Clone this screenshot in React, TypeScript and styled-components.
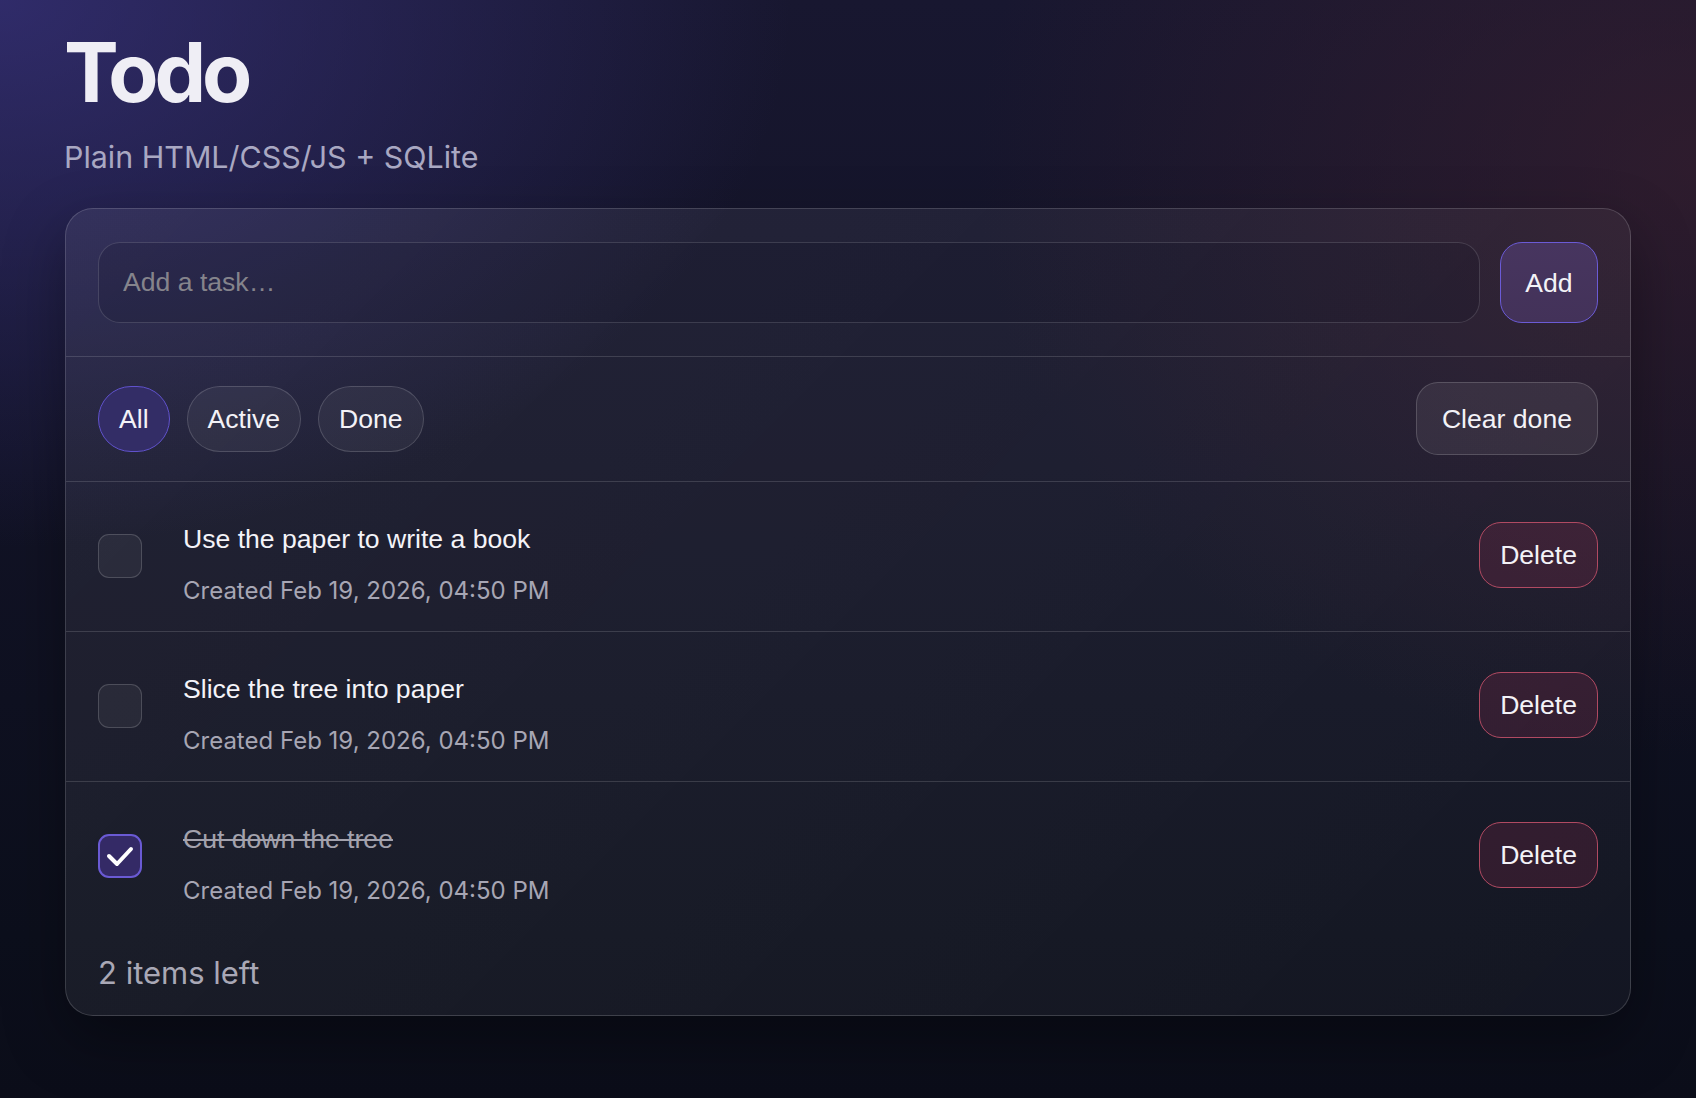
import React from "react";
import styled, { createGlobalStyle } from "styled-components";

const tasks = [
  { id: 3, title: "Use the paper to write a book", created: "Feb 19, 2026, 04:50 PM", done: false },
  { id: 2, title: "Slice the tree into paper", created: "Feb 19, 2026, 04:50 PM", done: false },
  { id: 1, title: "Cut down the tree", created: "Feb 19, 2026, 04:50 PM", done: true },
];

const filters = ["All", "Active", "Done"];

const App = () => {
  const left = tasks.filter((t) => !t.done).length;

  return (
    <>
      <GlobalStyle />
      <Page>
        <Title>Todo</Title>
        <Subtitle>Plain HTML/CSS/JS + SQLite</Subtitle>

        <Card>
          <AddRow>
            <TaskInput placeholder="Add a task…" />
            <AddButton>Add</AddButton>
          </AddRow>

          <FilterRow>
            <Pills>
              {filters.map((f) => (
                <Pill key={f} active={f === "All"}>
                  {f}
                </Pill>
              ))}
            </Pills>
            <ClearButton>Clear done</ClearButton>
          </FilterRow>

          <List>
            {tasks.map((t) => (
              <Item key={t.id}>
                <Check checked={t.done}>
                  {t.done && (
                    <svg width="32" height="32" viewBox="0 0 32 32">
                      <polyline
                        points="5,16 13,24 27,9"
                        fill="none"
                        stroke="#fff"
                        strokeWidth="4"
                        strokeLinecap="round"
                        strokeLinejoin="round"
                      />
                    </svg>
                  )}
                </Check>
                <TextBlock>
                  <TaskTitle done={t.done}>{t.title}</TaskTitle>
                  <Meta>Created {t.created}</Meta>
                </TextBlock>
                <DeleteButton>Delete</DeleteButton>
              </Item>
            ))}
          </List>

          <Footer>{left} items left</Footer>
        </Card>
      </Page>
    </>
  );
};

export default App;

const GlobalStyle = createGlobalStyle`
  html, body {
    margin: 0;
    padding: 0;
  }
  body {
    min-height: 100vh;
    font-family: Inter, "Noto Sans", sans-serif;
    color: #f1f0f6;
    background:
      radial-gradient(1100px 760px at 0% 0%, rgba(58, 52, 130, 0.7), transparent 72%),
      radial-gradient(1000px 820px at 100% 15%, rgba(62, 32, 46, 0.6), transparent 72%),
      linear-gradient(180deg, #181730 0%, #0c0f1c 85%, #0b0d19 100%);
  }
`;

const Page = styled.div`
  padding: 32px 65px 60px 64px;
  min-height: 100vh;
  box-sizing: border-box;
`;

const Title = styled.h1`
  margin: 0;
  font-family: Inter, sans-serif;
  font-size: 82px;
  font-weight: 700;
  line-height: 82px;
  letter-spacing: -0.05em;
  color: #efeef5;
`;

const Subtitle = styled.div`
  margin-top: 24px;
  font-size: 30.4px;
  line-height: 39px;
  color: #a9a8c2;
`;

const Card = styled.div`
  margin-top: 31px;
  margin-left: 1px;
  border: 1px solid rgba(255, 255, 255, 0.16);
  border-radius: 28px;
  background: linear-gradient(135deg, rgba(255, 255, 255, 0.07), rgba(255, 255, 255, 0.035));
  box-shadow: 0 24px 60px rgba(0, 0, 0, 0.35);
  overflow: hidden;
`;

const AddRow = styled.div`
  display: flex;
  gap: 20px;
  padding: 33px 32px;
  border-bottom: 1px solid rgba(255, 255, 255, 0.14);
`;

const TaskInput = styled.input`
  flex: 1;
  height: 81px;
  box-sizing: border-box;
  padding: 0 24px;
  border: 1.5px solid rgba(255, 255, 255, 0.14);
  border-radius: 22px;
  background: rgba(10, 10, 30, 0.16);
  color: #f1f0f6;
  font-family: "Liberation Sans", Arial, sans-serif;
  font-size: 26.6px;
  outline: none;

  &::placeholder {
    color: #85848c;
  }
`;

const BaseButton = styled.button`
  box-sizing: border-box;
  font-family: "Liberation Sans", Arial, sans-serif;
  font-size: 26.6px;
  line-height: 30px;
  color: #f3f2f7;
  border-width: 1.5px;
  border-style: solid;
  cursor: pointer;
`;

const AddButton = styled(BaseButton)`
  width: 98px;
  height: 81px;
  border-radius: 22px;
  border-color: #6b5bd6;
  background: linear-gradient(180deg, #47355f, #433259);
`;

const FilterRow = styled.div`
  display: flex;
  align-items: center;
  justify-content: space-between;
  padding: 25px 32px 26px;
  border-bottom: 1px solid rgba(255, 255, 255, 0.14);
`;

const Pills = styled.div`
  display: flex;
  gap: 17px;
`;

const Pill = styled(BaseButton)<{ active?: boolean }>`
  height: 66px;
  padding: 0 20px;
  border-radius: 999px;
  border-color: ${(p) => (p.active ? "#6052cc" : "rgba(255, 255, 255, 0.16)")};
  background: ${(p) => (p.active ? "#332d66" : "rgba(255, 255, 255, 0.05)")};
`;

const ClearButton = styled(BaseButton)`
  height: 73px;
  padding: 0 25px;
  border-radius: 22px;
  border-color: rgba(255, 255, 255, 0.17);
  background: rgba(255, 255, 255, 0.07);
`;

const List = styled.div`
  display: flex;
  flex-direction: column;
`;

const Item = styled.div`
  display: grid;
  grid-template-columns: 44px 1fr auto;
  column-gap: 41px;
  align-items: start;
  padding: 40px 32px 25px;
  border-bottom: 1px solid rgba(255, 255, 255, 0.14);

  &:last-child {
    border-bottom: none;
  }
`;

const Check = styled.div<{ checked?: boolean }>`
  margin-top: 12px;
  width: 44px;
  height: 44px;
  box-sizing: border-box;
  border-radius: 11px;
  border: ${(p) => (p.checked ? "2px solid #6a5ad4" : "1.5px solid rgba(255, 255, 255, 0.17)")};
  background: ${(p) => (p.checked ? "#342a66" : "rgba(255, 255, 255, 0.05)")};
  display: flex;
  align-items: center;
  justify-content: center;
`;

const TextBlock = styled.div`
  display: flex;
  flex-direction: column;
  gap: 19px;
  min-width: 0;
`;

const TaskTitle = styled.div<{ done?: boolean }>`
  font-family: "Liberation Sans", Arial, sans-serif;
  font-size: 26.6px;
  line-height: 34px;
  color: ${(p) => (p.done ? "#a3a2ad" : "#f4f3f8")};
  text-decoration: ${(p) => (p.done ? "line-through" : "none")};
`;

const Meta = styled.div`
  font-size: 24px;
  line-height: 31px;
  color: #a7a6b4;
`;

const DeleteButton = styled(BaseButton)`
  height: 66px;
  padding: 0 20px;
  border-radius: 22px;
  border-color: #b14a62;
  background: rgba(150, 45, 80, 0.22);
`;

const Footer = styled.div`
  padding: 22px 32px 23px;
  font-size: 31px;
  line-height: 39px;
  color: #a9a8b6;
`;
